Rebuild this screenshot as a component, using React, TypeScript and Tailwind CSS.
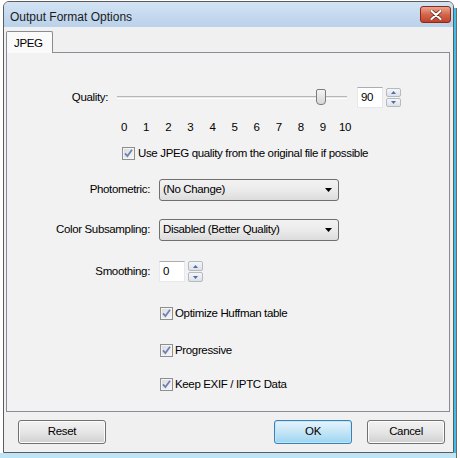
import React from "react";

function CheckBox() {
  return (
    <svg width="13" height="13" viewBox="0 0 13 13" className="shrink-0">
      <defs>
        <linearGradient id="cbg" x1="0" y1="0" x2="1" y2="1">
          <stop offset="0" stopColor="#dcdcdc" />
          <stop offset="1" stopColor="#f6f6f6" />
        </linearGradient>
      </defs>
      <rect x="0.5" y="0.5" width="12" height="12" fill="#f4f4f4" stroke="#8e8f8f" />
      <rect x="2" y="2" width="9" height="9" fill="url(#cbg)" />
      <path d="M3 6.3 L5.4 9 L10 2.8" stroke="#6e82b8" strokeWidth="1.8" fill="none" />
    </svg>
  );
}

function SpinButtons({ h }: { h: number }) {
  const half = h === 9 ? "h-[9px]" : "h-[10px]";
  return (
    <div className="flex flex-col gap-[1px] w-[15px]">
      <div
        className={`${half} border border-[#b5b9c2] rounded-[2px] bg-gradient-to-b from-[#f5f6f8] to-[#dde1e7] flex items-center justify-center`}
      >
        <svg width="5" height="3" viewBox="0 0 5 3">
          <path d="M0 3 L2.5 0 L5 3 Z" fill="#4d6ea8" />
        </svg>
      </div>
      <div
        className={`${half} border border-[#b5b9c2] rounded-[2px] bg-gradient-to-b from-[#f5f6f8] to-[#dde1e7] flex items-center justify-center`}
      >
        <svg width="5" height="3" viewBox="0 0 5 3">
          <path d="M0 0 L2.5 3 L5 0 Z" fill="#4d6ea8" />
        </svg>
      </div>
    </div>
  );
}

function Combo({ text }: { text: string }) {
  return (
    <div className="w-[180px] h-[22px] border border-[#707070] rounded-[3px] bg-gradient-to-b from-[#f2f2f2] via-[#ebebeb] to-[#dcdcdc] flex items-center pl-[3px] pr-[6px]">
      <span className="flex-1">{text}</span>
      <svg width="7" height="4" viewBox="0 0 7 4">
        <path d="M0 0 L7 0 L3.5 4 Z" fill="#000" />
      </svg>
    </div>
  );
}

function Button({ label, w, def }: { label: string; w: string; def?: boolean }) {
  return (
    <div
      className={`${w} h-[24px] rounded-[3px] border flex items-center justify-center ${
        def
          ? "border-[#3c7fb1] bg-gradient-to-b from-[#e5f4fc] via-[#c4e5f6] to-[#9bd4f2] shadow-[inset_0_0_0_1px_#bfe6fa]"
          : "border-[#707070] bg-gradient-to-b from-[#f2f2f2] via-[#e6e6e6] to-[#d0d0d0] shadow-[inset_0_0_0_1px_#fcfcfc]"
      }`}
    >
      {label}
    </div>
  );
}

export default function App() {
  const nums = ["0", "1", "2", "3", "4", "5", "6", "7", "8", "9", "10"];
  return (
    <div className="relative w-[460px] h-[458px] bg-white overflow-hidden font-['Liberation_Sans',Arial,sans-serif] text-[11.5px] tracking-[-0.35px] text-black">
      {/* background app hints */}
      <div className="absolute left-[454px] top-[8px] w-[2px] h-[450px] bg-[#3cc0ea]" />
      <div className="absolute left-[456px] top-[8px] w-[1px] h-[450px] bg-[#6b6b6b]" />
      <div className="absolute left-0 top-[453px] w-[456px] h-[5px] bg-[#bfe4f6]" />

      {/* window */}
      <div className="absolute left-[3px] top-[1px] w-[451px] h-[452px] border border-[#5c5c5c] rounded-t-[6px] flex flex-col overflow-hidden bg-[#f0f0f0]">
        {/* title bar */}
        <div className="h-[25px] shrink-0 bg-gradient-to-b from-[#d3e3f4] to-[#b9d1ea] flex items-start pl-[6px] pr-[2px]">
          <span className="flex-1 pt-[6px] text-[12px] tracking-normal text-[#1b1b1b]">Output Format Options</span>
          <div className="mt-[4px] w-[31px] h-[17px] rounded-[3px] border border-[#8b2a17] bg-gradient-to-b from-[#e9a592] via-[#d4664c] to-[#c2412a] flex items-center justify-center">
            <svg width="12" height="10" viewBox="0 0 12 10">
              <path d="M1.5 1 L10.5 9 M10.5 1 L1.5 9" stroke="#6b2a1e" strokeWidth="3.6" strokeLinecap="round" />
              <path d="M1.5 1 L10.5 9 M10.5 1 L1.5 9" stroke="#ffffff" strokeWidth="2.2" strokeLinecap="round" />
            </svg>
          </div>
        </div>

        {/* client */}
        <div className="flex-1 flex flex-col pl-[2px] pr-[3px] pt-[4px]">
          {/* tab strip */}
          <div className="h-[21px] flex items-end">
            <div className="relative w-[47px] border border-b-0 border-[#898c95] rounded-t-[2px] bg-[#fafafa] pl-[7px] pt-[3px] z-10 -mb-[1px] h-[22px]">
              JPEG
            </div>
          </div>
          {/* panel */}
          <div className="h-[360px] border border-[#898c95] bg-[#f2f2f2] flex flex-col">
            {/* Quality row */}
            <div className="mt-[34px] h-[21px] flex items-center">
              <div className="w-[101px] text-right">Quality:</div>
              <div className="ml-[9px] relative w-[230px] h-[21px] flex items-center">
                <div className="w-full h-[3px] border-t border-[#b7b7b7] border-b border-b-[#ffffff] bg-[#e7e7e7]" />
                <div className="absolute left-[199px] top-[2px] w-[10px] h-[16px] border border-[#7c7c7c] rounded-t-[2px] rounded-b-[4px] bg-gradient-to-b from-[#f4f4f4] to-[#d6d6d6]" />
              </div>
              <div className="ml-[10px] w-[26px] h-[21px] bg-white border border-[#e3e9ef] border-t-[#abadb3] flex items-center pl-[3px]">
                90
              </div>
              <div className="ml-[3px]">
                <SpinButtons h={9} />
              </div>
            </div>
            {/* numbers */}
            <div className="mt-[12px] h-[14px] ml-[106px] w-[243px] grid grid-cols-11 text-center leading-[14px]">
              {nums.map((n) => (
                <span key={n}>{n}</span>
              ))}
            </div>
            {/* use jpeg quality */}
            <div className="mt-[13px] h-[13px] ml-[115px] flex items-center gap-[3px]">
              <CheckBox />
              <span>Use JPEG quality from the original file if possible</span>
            </div>
            {/* Photometric */}
            <div className="mt-[19px] h-[22px] flex items-center">
              <div className="w-[143px] text-right">Photometric:</div>
              <div className="ml-[9px]">
                <Combo text="(No Change)" />
              </div>
            </div>
            {/* Color subsampling */}
            <div className="mt-[18px] h-[22px] flex items-center">
              <div className="w-[143px] text-right">Color Subsampling:</div>
              <div className="ml-[9px]">
                <Combo text="Disabled (Better Quality)" />
              </div>
            </div>
            {/* Smoothing */}
            <div className="mt-[20px] h-[21px] flex items-center">
              <div className="w-[143px] text-right">Smoothing:</div>
              <div className="ml-[9px] w-[26px] h-[21px] bg-white border border-[#e3e9ef] border-t-[#abadb3] flex items-center pl-[3px]">
                0
              </div>
              <div className="ml-[3px]">
                <SpinButtons h={10} />
              </div>
            </div>
            {/* checkboxes */}
            <div className="mt-[25px] h-[13px] ml-[153px] flex items-center gap-[2px]">
              <CheckBox />
              <span>Optimize Huffman table</span>
            </div>
            <div className="mt-[24px] h-[13px] ml-[153px] flex items-center gap-[2px]">
              <CheckBox />
              <span>Progressive</span>
            </div>
            <div className="mt-[21px] h-[13px] ml-[153px] flex items-center gap-[2px]">
              <CheckBox />
              <span>Keep EXIF / IPTC Data</span>
            </div>
          </div>
          {/* buttons */}
          <div className="mt-[8px] flex items-center pl-[12px]">
            <Button label="Reset" w="w-[88px]" />
            <div className="flex-1" />
            <Button label="OK" w="w-[78px]" def />
            <div className="w-[15px]" />
            <Button label="Cancel" w="w-[78px]" />
            <div className="w-[5px]" />
          </div>
        </div>
      </div>
    </div>
  );
}
